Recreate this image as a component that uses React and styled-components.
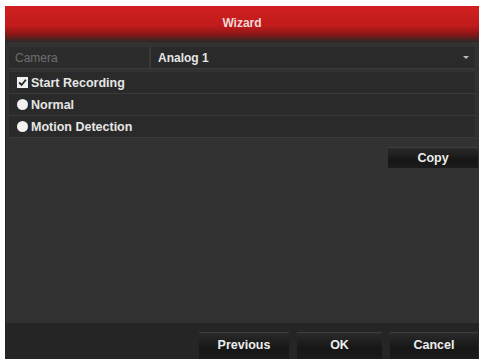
import React from "react";
import styled, { createGlobalStyle } from "styled-components";

const GlobalStyle = createGlobalStyle`
  html, body {
    margin: 0;
    padding: 0;
    background: #ffffff;
    font-family: "Liberation Sans", Arial, sans-serif;
  }
`;

const Dialog = styled.div`
  margin: 6px 0 0 5px;
  width: 474px;
  height: 353px;
  display: flex;
  flex-direction: column;
  background: #323232;
  overflow: hidden;
`;

const Header = styled.div`
  height: 36px;
  display: flex;
  align-items: center;
  justify-content: center;
  padding-top: 1px;
  padding-bottom: 3px;
  box-sizing: border-box;
  background: linear-gradient(to bottom, #d22020 0%, #c01b1b 55%, #8e1616 78%, #2c2828 100%);
  color: #f4d8d8;
  font-size: 12px;
  font-weight: bold;
`;

const Body = styled.div`
  flex: 1;
  display: flex;
  flex-direction: column;
  padding: 5px 4px 0 3px;
  border-left: 1px solid #262626;
`;

const Row = styled.div`
  height: 21px;
  flex: none;
  display: flex;
  align-items: center;
  background: #2a2a2a;
  border-bottom: 1px solid #3b3b3b;
  color: #e6e6e6;
  font-size: 12.5px;
  font-weight: bold;
  gap: 3px;
  padding-left: ${(p) => (p.$split ? 0 : "8px")};
  margin-bottom: ${(p) => (p.$split ? "3px" : 0)};
`;

const Label = styled.div`
  width: 142px;
  height: 100%;
  display: flex;
  align-items: center;
  padding-left: 6px;
  box-sizing: border-box;
  color: #6e6e6e;
  font-size: 12px;
  font-weight: normal;
  border-right: 2px solid #3a3a3a;
  background: #2c2c2c;
`;

const Value = styled.div`
  flex: 1;
  display: flex;
  align-items: center;
  justify-content: space-between;
  padding: 0 6px 0 4px;
  font-size: 12px;
`;

const Arrow = styled.span`
  width: 0;
  height: 0;
  border-left: 3px solid transparent;
  border-right: 3px solid transparent;
  border-top: 3px solid #bbbbbb;
`;

const Check = styled.span`
  width: 11px;
  height: 11px;
  background: #f0f0f0;
  display: inline-flex;
  align-items: center;
  justify-content: center;
`;

const Radio = styled.span`
  width: 11px;
  height: 11px;
  border-radius: 50%;
  background: #f2f2f2;
`;

const Tools = styled.div`
  display: flex;
  justify-content: flex-end;
  margin-top: 9px;
  margin-right: -3px;
`;

const Btn = styled.button`
  width: ${(p) => p.$w || 90}px;
  height: 21px;
  border: none;
  border-top: 1px solid #3e3e3e;
  background: linear-gradient(to bottom, #2a2a2a 0%, #161616 60%, #1c1c1c 100%);
  color: #ededed;
  font-family: "Liberation Sans", Arial, sans-serif;
  font-size: 12.5px;
  font-weight: bold;
  padding: 0;
`;

const Footer = styled.div`
  height: 36px;
  background: #252525;
  display: flex;
  justify-content: flex-end;
  align-items: flex-end;
  gap: 8px;
  padding-right: 1px;
`;

const FootBtn = styled(Btn)`
  height: 27px;
  padding-bottom: 2px;
`;

export default function App() {
  return (
    <>
      <GlobalStyle />
      <Dialog>
        <Header>Wizard</Header>
        <Body>
          <Row $split>
            <Label>Camera</Label>
            <Value>
              <span>Analog 1</span>
              <Arrow />
            </Value>
          </Row>
          <Row>
            <Check>
              <svg width="9" height="9" viewBox="0 0 8 8">
                <path d="M1 4 L3.2 6.2 L7 1.6" stroke="#222" strokeWidth="1.6" fill="none" />
              </svg>
            </Check>
            Start Recording
          </Row>
          <Row>
            <Radio />
            Normal
          </Row>
          <Row>
            <Radio />
            Motion Detection
          </Row>
          <Tools>
            <Btn $w={90}>Copy</Btn>
          </Tools>
        </Body>
        <Footer>
          <FootBtn $w={90}>Previous</FootBtn>
          <FootBtn $w={85}>OK</FootBtn>
          <FootBtn $w={88}>Cancel</FootBtn>
        </Footer>
      </Dialog>
    </>
  );
}
